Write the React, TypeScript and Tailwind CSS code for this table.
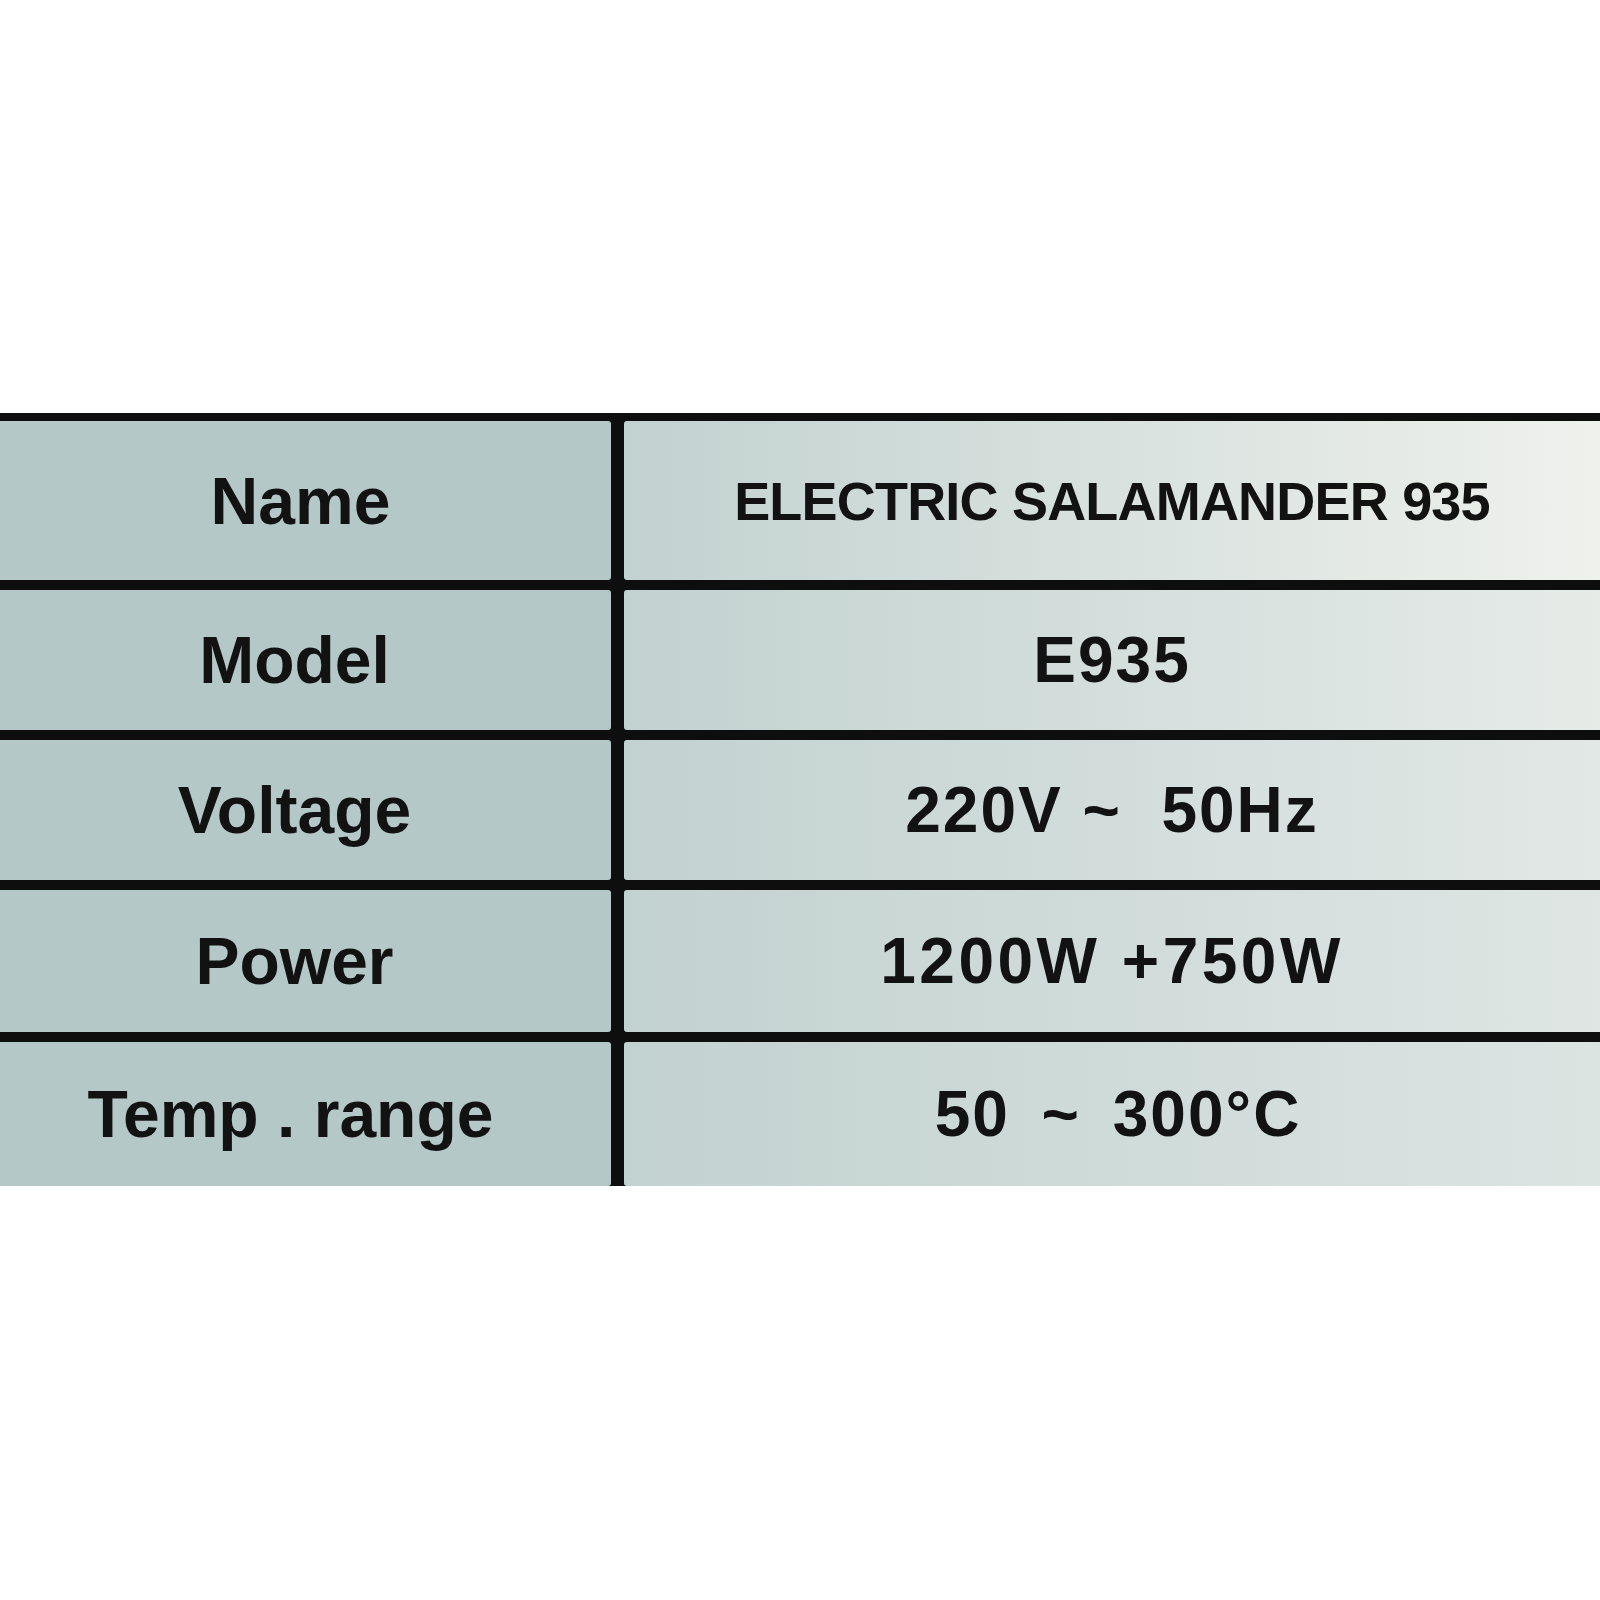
const rows = [
  { label: "Name", value: "ELECTRIC SALAMANDER 935", h: "h-[159px]", small: true, pr: "pr-[10px]", to: "to-[#eff1ed]" },
  { label: "Model", value: "E935", h: "h-[140px]", pr: "pr-[22px]", to: "to-[#e6ebe8]" },
  { label: "Voltage", value: "220V ~  50Hz", h: "h-[140px]", pr: "pr-[22px]", to: "to-[#e2e8e6]" },
  { label: "Power", value: "1200W +750W", h: "h-[142px]", pr: "pr-[22px]", wide: true, to: "to-[#dfe6e4]" },
  { label: "Temp . range", value: "50 ~ 300°C", h: "h-[144px]", pr: "pr-[30px]", spaced: true, to: "to-[#dce4e2]" },
]

export default function App() {
  return (
    <div className="w-[1600px] h-[1600px] bg-white pt-[413px] font-['Liberation_Sans',Arial,sans-serif] text-[#121212]">
      <div className="bg-[#0e0e0e] pt-[8px] grid grid-cols-[611px_976px] gap-x-[13px] gap-y-[10px]">
        {rows.map((r) => (
          <div key={r.label} className="contents">
            <div className={`${r.h} ${r.pr} bg-[#b4c8c7] rounded-r-[3px] flex items-center justify-center`}>
              <span className="text-[66px] font-bold leading-none whitespace-pre">{r.label}</span>
            </div>
            <div className={`${r.h} bg-gradient-to-r from-[#c2d2d0] ${r.to} rounded-l-[3px] flex items-center justify-center`}>
              {r.small ? (
                <span className="text-[54px] font-bold leading-none tracking-[-0.8px] whitespace-pre">{r.value}</span>
              ) : r.wide ? (
                <span className="text-[64px] font-bold leading-none tracking-[3.5px] whitespace-pre">{r.value}</span>
              ) : r.spaced ? (
                <span className="text-[64px] font-bold leading-none tracking-[2px] [word-spacing:12px] whitespace-pre pl-[12px]">{r.value}</span>
              ) : (
                <span className="text-[64px] font-bold leading-none tracking-[2px] whitespace-pre">{r.value}</span>
              )}
            </div>
          </div>
        ))}
      </div>
    </div>
  )
}
